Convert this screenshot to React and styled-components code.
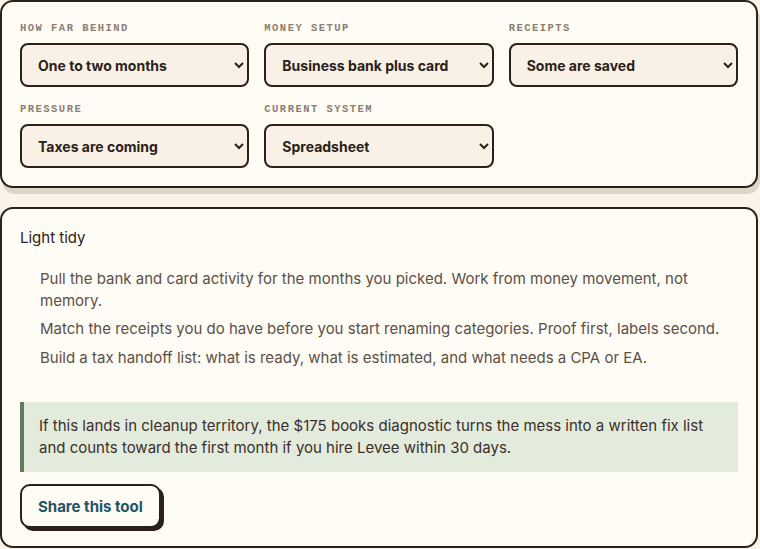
import React from 'react';
import styled, { createGlobalStyle } from 'styled-components';

const INK = '#2b2119';
const CARD_BG = '#fffcf5';
const FIELD_BG = '#f9f1e6';

const GlobalStyle = createGlobalStyle`
  html, body {
    margin: 0;
    padding: 0;
    background: #faf3e8;
  }
  body {
    font-family: Inter, "Noto Sans", sans-serif;
    color: ${INK};
  }
`;

const Page = styled.div`
  display: flex;
  flex-direction: column;
  gap: 19px;
  padding-right: 2px;
`;

const Card = styled.section`
  background: ${CARD_BG};
  border: 2px solid ${INK};
  border-radius: 13px;
  padding: 18px;
  box-shadow: ${(props) => (props.raised ? '2px 6px 0 #ddd5c8' : 'none')};
`;

const FieldGrid = styled.div`
  display: grid;
  grid-template-columns: repeat(3, 1fr);
  column-gap: 15px;
  row-gap: 14px;
`;

const Field = styled.label`
  display: flex;
  flex-direction: column;
  gap: 7px;
`;

const FieldLabel = styled.span`
  font-family: "Liberation Mono", "DejaVu Sans Mono", monospace;
  font-weight: 700;
  font-size: 10.5px;
  line-height: 16px;
  letter-spacing: 0.14em;
  text-transform: uppercase;
  color: #8a7f73;
`;

const Select = styled.select`
  height: 44px;
  width: 100%;
  padding: 0 10px 0 12px;
  background: ${FIELD_BG};
  border: 2px solid ${INK};
  border-radius: 8px;
  font-family: Inter, "Noto Sans", sans-serif;
  font-weight: 700;
  font-size: 14px;
  color: ${INK};
  outline: none;
`;

const Heading = styled.p`
  margin: 0;
  font-size: 15px;
  line-height: 22px;
  color: ${INK};
`;

const Steps = styled.ul`
  list-style: none;
  margin: 19px 0 0;
  padding: 0 0 0 20px;
  display: flex;
  flex-direction: column;
  gap: 7px;
`;

const Step = styled.li`
  font-size: 15px;
  line-height: 21.5px;
  color: #5b5048;
`;

const Callout = styled.div`
  margin-top: 34px;
  background: #e3ebdc;
  border-left: 4px solid #5e7f5e;
  padding: 13px 24px 13px 15px;
  font-size: 15px;
  line-height: 22px;
  color: #3a302a;
`;

const ShareButton = styled.button`
  margin-top: 12px;
  height: 44px;
  padding: 0 16px;
  background: ${CARD_BG};
  border: 2px solid ${INK};
  border-radius: 10px;
  box-shadow: 3px 3px 0 ${INK};
  font-family: Inter, "Noto Sans", sans-serif;
  font-weight: 700;
  font-size: 15px;
  color: #1f5466;
  cursor: pointer;
`;

const fields = [
  { label: 'How far behind', value: 'One to two months' },
  { label: 'Money setup', value: 'Business bank plus card' },
  { label: 'Receipts', value: 'Some are saved' },
  { label: 'Pressure', value: 'Taxes are coming' },
  { label: 'Current system', value: 'Spreadsheet' },
];

const steps = [
  'Pull the bank and card activity for the months you picked. Work from money movement, not memory.',
  'Match the receipts you do have before you start renaming categories. Proof first, labels second.',
  'Build a tax handoff list: what is ready, what is estimated, and what needs a CPA or EA.',
];

const App = () => (
  <Page>
    <GlobalStyle />
    <Card raised>
      <FieldGrid>
        {fields.map((field) => (
          <Field key={field.label}>
            <FieldLabel>{field.label}</FieldLabel>
            <Select defaultValue={field.value}>
              <option>{field.value}</option>
            </Select>
          </Field>
        ))}
      </FieldGrid>
    </Card>
    <Card>
      <Heading>Light tidy</Heading>
      <Steps>
        {steps.map((step) => (
          <Step key={step}>{step}</Step>
        ))}
      </Steps>
      <Callout>
        If this lands in cleanup territory, the $175 books diagnostic turns the mess into a written fix
        list and counts toward the first month if you hire Levee within 30 days.
      </Callout>
      <ShareButton type="button">Share this tool</ShareButton>
    </Card>
  </Page>
);

export default App;
